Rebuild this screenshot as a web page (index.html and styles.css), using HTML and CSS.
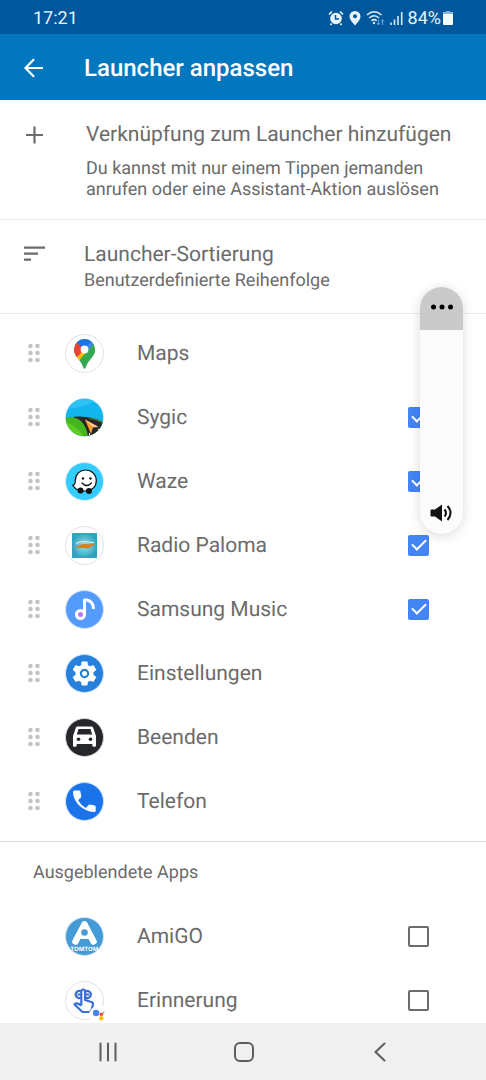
FILE: index.html
```html
<!DOCTYPE html>
<html lang="de">

<head>
  <meta charset="UTF-8">
  <meta name="viewport" content="width=device-width, initial-scale=1.0">
  <title>Launcher anpassen</title>
  <link rel="stylesheet" href="styles.css">
</head>

<body>
  <div class="status">
    <span class="time">17:21</span>
    <div class="status-icons">
      <svg width="16" height="16" viewBox="0 0 16 16">
        <circle cx="8" cy="8.500" r="5.800" fill="#e8f4ff" />
        <path d="M1 4.500 4 1.500M15 4.500l-3-3M3.500 13.500 2.500 15M12.500 13.500l1 1.500" stroke="#e8f4ff" stroke-width="1.700" fill="none" />
        <path d="M7.500 5v4h3.500" stroke="#01579b" stroke-width="1.500" fill="none" />
      </svg>
      <svg width="12" height="16" viewBox="0 0 12 16">
        <path d="M6 1a5.500 5.500 0 0 0-5.500 5.500C.5 10 6 15.500 6 15.500s5.500-5.500 5.500-9A5.500 5.500 0 0 0 6 1z" fill="#e8f4ff" />
        <circle cx="6" cy="6.300" r="2" fill="#01579b" />
      </svg>
      <svg width="19" height="16" viewBox="0 0 19 16">
        <g fill="none" stroke="#d8eaf8" stroke-width="1.600">
          <path d="M1 5q7-6.500 14.500 0M3.300 8q5-4.500 9.700 0M5.500 10.700q2.700-2.300 5.200 0" />
        </g>
        <circle cx="8" cy="13" r="1.200" fill="#d8eaf8" />
        <path d="M12.500 9.500v5M11 13l1.500 2 1.500-2M16.500 15v-5M15 11.500l1.500-2 1.500 2" stroke="#6da3d2" fill="none" />
      </svg>
      <svg width="13" height="16" viewBox="0 0 13 16">
        <path d="M1 12.500V15M4.500 9.500V15M8 6v9M11.700 2v13" stroke="#d8eaf8" stroke-width="1.600" />
      </svg>
      <span class="percent">84%</span>
      <svg width="10" height="16" viewBox="0 0 10 16">
        <path d="M3 1h4v2H3z" fill="#7fabd3" />
        <rect y="2" width="10" height="13" rx="1" fill="#f2f9ff" />
        <path d="M0 4V3q0-1 1-1h8q1 0 1 1v1z" fill="#8db6da" />
      </svg>
    </div>
  </div>

  <header class="appbar">
    <button class="back" type="button" aria-label="Zurück">
      <svg width="20" height="20" viewBox="0 0 20 20">
        <path d="M19 10H2M10 1.300 1.500 10l8.500 8.700" fill="none" stroke="#fff" stroke-width="2.200" />
      </svg>
    </button>
    <h1>Launcher anpassen</h1>
  </header>

  <main>
    <button class="option option-add" type="button">
      <svg width="24" height="28" viewBox="0 0 24 28">
        <path d="M12.500 5.500v17M4 14h17" stroke="#6b6b6b" stroke-width="2.200" />
      </svg>
      <span class="option-text">
        <span class="option-title">Verknüpfung zum Launcher hinzufügen</span>
        <span class="option-desc">Du kannst mit nur einem Tippen jemanden anrufen oder eine Assistant-Aktion auslösen</span>
      </span>
    </button>
    <button class="option" type="button">
      <svg width="24" height="28" viewBox="0 0 24 28">
        <path d="M2 6.700h21M2 12.700h14M2 18.700h7" stroke="#6b6b6b" stroke-width="2.200" />
      </svg>
      <span class="option-text">
        <span class="option-title">Launcher-Sortierung</span>
        <span class="option-desc">Benutzerdefinierte Reihenfolge</span>
      </span>
    </button>

    <svg class="defs" aria-hidden="true">
      <symbol id="grip" viewBox="0 0 14 20">
        <g fill="#c4c4c4">
          <circle cx="3.500" cy="3" r="2.300" />
          <circle cx="10.500" cy="3" r="2.300" />
          <circle cx="3.500" cy="10" r="2.300" />
          <circle cx="10.500" cy="10" r="2.300" />
          <circle cx="3.500" cy="17" r="2.300" />
          <circle cx="10.500" cy="17" r="2.300" />
        </g>
      </symbol>
    </svg>

    <ul class="apps">
      <li>
        <button class="grip" type="button" aria-label="Maps verschieben"><svg width="14" height="20"><use href="#grip" /></svg></button>
        <svg class="icon" viewBox="0 0 39 39">
          <clipPath id="pin">
            <path d="M19.500 5A10.500 10.500 0 0 0 9 15.500c0 4 2 6.500 4.500 9.500 2.500 3.200 4 5.500 4.800 8.500.5 1.700 1.900 1.700 2.400 0 .8-3 2.300-5.300 4.800-8.500 2.500-3 4.500-5.500 4.500-9.500A10.500 10.500 0 0 0 19.500 5z" />
          </clipPath>
          <circle cx="19.500" cy="19.500" r="19" fill="#fff" stroke="#dfe1e5" />
          <g clip-path="url(#pin)">
            <path d="M5 2h30v34H5z" fill="#34a853" />
            <path d="M5 25 20 8l3 10-12 14z" fill="#fbbc04" />
            <path d="M5 8h7l8 7-9.500 9.500L5 20z" fill="#ea4335" />
            <path d="M11.500 8.500 17 2h9l1.500 6L20 16z" fill="#1a73e8" />
            <path d="m23 4 6 6-6.500 8-4-2.500 8-8z" fill="#4285f4" />
            <path d="m29 9-17 20 4 5 20-10V12z" fill="#34a853" />
          </g>
          <circle cx="19.500" cy="15.500" r="3.900" fill="#fff" />
        </svg>
        <label>Maps</label>
      </li>
      <li>
        <button class="grip" type="button" aria-label="Sygic verschieben"><svg width="14" height="20"><use href="#grip" /></svg></button>
        <svg class="icon" viewBox="0 0 39 39">
          <clipPath id="disc">
            <circle cx="19.500" cy="19.500" r="18.700" />
          </clipPath>
          <circle cx="19.500" cy="19.500" r="19" fill="#fff" stroke="#d5eef5" />
          <g clip-path="url(#disc)">
            <path d="M0 0h39v39H0z" fill="#12b5ee" />
            <path d="M0 11Q22 10 32 0H0z" fill="#2fc2f4" />
            <path d="M0 19.500q20-2 39 5V39H0z" fill="#42b51f" />
            <path d="M0 24q12 3 19 15H0z" fill="#5ecb22" />
            <path d="M9 18.700q17-1.500 30 6V34l-5 5H23q-1-10-7-16-3-3-7-3.300z" fill="#26262a" />
            <path d="M24 20q7 1 13 4" stroke="#3f7d2c" stroke-width="1.500" fill="none" />
            <path d="M24.500 35v4M33 31l5 3.500" stroke="#ddd" stroke-width="1.200" />
            <path d="M20 21.500 33.500 29l-5.500.3-2 6.700z" fill="#ff9b2e" />
            <path d="M20 21.500 33.500 29l-5.500.3z" fill="#ffc98c" />
          </g>
        </svg>
        <label for="sygic">Sygic</label>
        <input type="checkbox" id="sygic" checked>
      </li>
      <li>
        <button class="grip" type="button" aria-label="Waze verschieben"><svg width="14" height="20"><use href="#grip" /></svg></button>
        <svg class="icon" viewBox="0 0 39 39">
          <circle cx="19.500" cy="19.500" r="19" fill="#33ccff" stroke="#d9eef6" />
          <path d="M20.500 8c6.300 0 10.800 4.700 10.800 10.500 0 6.300-4.500 10.500-11 10.500h-4C12 28.500 9.500 26 7.800 23.300c2.200-.3 2.500-2 2.500-4.800C10.300 12 15 8 20.500 8z" fill="#fff" stroke="#111" stroke-width="1.200" />
          <circle cx="15.500" cy="28.500" r="3" fill="#111" />
          <circle cx="24" cy="29" r="3" fill="#111" />
          <circle cx="18" cy="16.500" r="1.200" fill="#111" />
          <circle cx="25.500" cy="16.500" r="1.200" fill="#111" />
          <path d="M17 21q4.500 5 9.500 0" stroke="#111" stroke-width="1.300" stroke-linecap="round" fill="none" />
        </svg>
        <label for="waze">Waze</label>
        <input type="checkbox" id="waze" checked>
      </li>
      <li>
        <button class="grip" type="button" aria-label="Radio Paloma verschieben"><svg width="14" height="20"><use href="#grip" /></svg></button>
        <svg class="icon" viewBox="0 0 39 39">
          <radialGradient id="glow">
            <stop offset="0" stop-color="#a5e0ea" />
            <stop offset="1" stop-color="#2fa3bd" />
          </radialGradient>
          <circle cx="19.500" cy="19.500" r="19" fill="#fff" stroke="#dfe1e5" />
          <path d="M7 7h25v25H7z" fill="url(#glow)" />
          <path d="M11 17.500q4-2.500 9-1.800 5 .7 9 .8" stroke="#f3f0de" fill="none" />
          <path d="M8.500 21.500q3.500-.3 5.500-2 2.500-2 6.500-1.500 5.500.6 10.500-.2-3 1-4.500 2.500-2.500 2.500-6.500 2-6-.8-11.500-.8z" fill="#e27a1c" />
        </svg>
        <label for="paloma">Radio Paloma</label>
        <input type="checkbox" id="paloma" checked>
      </li>
      <li>
        <button class="grip" type="button" aria-label="Samsung Music verschieben"><svg width="14" height="20"><use href="#grip" /></svg></button>
        <svg class="icon" viewBox="0 0 39 39">
          <circle cx="19.500" cy="19.500" r="19" fill="#559bfb" stroke="#d9e6f7" />
          <path d="M19.500 25V10h2.500q6.500 1.500 6.500 9" fill="none" stroke="#fff" stroke-width="3" stroke-linejoin="round" />
          <circle cx="15.500" cy="24.500" r="4" fill="#b57be8" stroke="#fff" stroke-width="3" />
        </svg>
        <label for="music">Samsung Music</label>
        <input type="checkbox" id="music" checked>
      </li>
      <li>
        <button class="grip" type="button" aria-label="Einstellungen verschieben"><svg width="14" height="20"><use href="#grip" /></svg></button>
        <svg class="icon" viewBox="0 0 39 39">
          <circle cx="19.500" cy="19.500" r="19" fill="#2680dc" stroke="#cfe6fb" />
          <g transform="translate(4.500 4.500) scale(1.250)">
            <path fill="#fff" d="M19.140 12.940c.04-.3.06-.61.06-.94 0-.32-.02-.64-.07-.94l2.030-1.580a.49.49 0 0 0 .12-.61l-1.920-3.320a.488.488 0 0 0-.59-.22l-2.390.96c-.5-.38-1.030-.7-1.620-.94l-.36-2.540a.484.484 0 0 0-.48-.41h-3.840c-.24 0-.43.17-.47.41l-.36 2.540c-.59.24-1.130.57-1.620.94l-2.390-.96c-.22-.08-.47 0-.59.22L2.740 8.870c-.12.21-.08.47.12.61l2.030 1.580c-.05.3-.09.63-.09.94s.02.640.070.940l-2.030 1.580a.49.49 0 0 0-.12.610l1.920 3.320c.12.220.370.290.590.220l2.390-.960c.5.380 1.030.700 1.620.940l.360 2.540c.050.240.240.410.480.410h3.840c.240 0 .440-.170.470-.410l.360-2.540c.590-.240 1.130-.560 1.620-.940l2.390.960c.220.080.470 0 .590-.220l1.920-3.320c.120-.220.070-.470-.120-.610z" />
            <circle cx="12" cy="12" r="2.900" fill="#fff" stroke="#2680dc" stroke-width="1.800" />
          </g>
        </svg>
        <label>Einstellungen</label>
      </li>
      <li>
        <button class="grip" type="button" aria-label="Beenden verschieben"><svg width="14" height="20"><use href="#grip" /></svg></button>
        <svg class="icon" viewBox="0 0 39 39">
          <circle cx="19.500" cy="19.500" r="19" fill="#25272b" stroke="#d8dadd" />
          <path d="M12.500 8.500h14q1.200 0 1.700 1.300L31 18v9.500q0 1.300-1.300 1.300h-1q-1.400 0-1.400-1.300V26H11.700v1.500q0 1.300-1.400 1.300h-1Q8 28.800 8 27.500V18l2.800-8.200q.5-1.300 1.700-1.300z" fill="#fff" />
          <path d="m13.500 11-1.700 5.500h15.400L25.500 11z" fill="#25272b" />
          <circle cx="13.500" cy="21.300" r="1.800" fill="#25272b" />
          <circle cx="25.500" cy="21.300" r="1.800" fill="#25272b" />
        </svg>
        <label>Beenden</label>
      </li>
      <li>
        <button class="grip" type="button" aria-label="Telefon verschieben"><svg width="14" height="20"><use href="#grip" /></svg></button>
        <svg class="icon" viewBox="0 0 39 39">
          <circle cx="19.500" cy="19.500" r="19" fill="#1a73e8" stroke="#cfe2f8" />
          <path d="M9.500 8.500h4.700q1 0 1.200 1l.9 4.500q.1.800-.4 1.400l-2.800 2.800q2.700 5 7.700 7.700l2.800-2.900q.6-.6 1.400-.4l4.700 1q1 .2 1 1.200v3.700q0 1.500-1.500 1.500C17.500 29.500 8 19.500 8 10q0-1.500 1.500-1.500z" fill="#fff" />
        </svg>
        <label>Telefon</label>
      </li>
    </ul>

    <h2>Ausgeblendete Apps</h2>
    <ul class="apps hidden-apps">
      <li>
        <svg class="icon" viewBox="0 0 39 39">
          <circle cx="19.500" cy="19.500" r="19" fill="#449bd5" stroke="#cfe4f3" />
          <path d="M19.500 7.500 10.500 24.500M19.500 7.500l9 17" stroke="#fff" stroke-width="6.500" stroke-linecap="round" />
          <path d="m19.500 7-7 14 4.500 1h5l4.500-1z" fill="#fff" />
          <circle cx="19.500" cy="15.500" r="3.300" fill="#449bd5" />
          <text x="19.500" y="34" class="brand">TOMTOM</text>
        </svg>
        <label for="amigo">AmiGO</label>
        <input type="checkbox" id="amigo">
      </li>
      <li>
        <svg class="icon" viewBox="0 0 39 39">
          <circle cx="19.500" cy="19.500" r="19" fill="#fff" stroke="#dbe3ee" />
          <g fill="none" stroke="#3b6fd8" stroke-width="2.200" stroke-linejoin="round">
            <path d="M16.300 24.500V10.300q0-1.800 1.900-1.800t1.900 1.800v8.700l6.200 2q2 .7 1.700 2.500l-1.300 5q-.6 2.500-2.500 2.500h-6.700L9.500 23.500q2-2.500 6.800 1" />
            <path d="M16 16.500a3.500 3.500 0 1 1 0-6M20.500 10.500a3.500 3.500 0 1 1 0 6M12.500 13.500h4M20 13.500h4" />
          </g>
          <circle cx="34" cy="34.500" r="10" fill="#fff" />
          <circle cx="31" cy="32" r="3.200" fill="#4285f4" />
          <circle cx="36.300" cy="33.300" r="1.800" fill="#ea4335" />
          <circle cx="38.700" cy="31.500" r=".8" fill="#34a853" />
          <circle cx="36.300" cy="37.200" r="2.200" fill="#fbbc04" />
        </svg>
        <label for="erinnerung">Erinnerung</label>
        <input type="checkbox" id="erinnerung">
      </li>
    </ul>
  </main>

  <!-- 音量面板 浮在列表上面 -->
  <div class="volume">
    <button class="volume-more" type="button" aria-label="Mehr">
      <svg width="24" height="6" viewBox="0 0 24 6">
        <circle cx="3.500" cy="3" r="2.500" />
        <circle cx="12" cy="3" r="2.500" />
        <circle cx="20.500" cy="3" r="2.500" />
      </svg>
    </button>
    <input class="volume-range" type="range" min="0" max="15" value="0" aria-label="Lautstärke">
    <svg width="23" height="18" viewBox="0 0 23 18">
      <path d="M1.500 5.500H5L12 .5v17L5 12.500H1.500Q.5 12.500.5 11.500v-5q0-1 1-1z" fill="#111" />
      <path d="M14.500 5.500q3 3.500 0 7M17.500 2q6 7 0 14" fill="none" stroke="#111" stroke-width="2" />
    </svg>
  </div>

  <nav>
    <button type="button" aria-label="Letzte Apps">
      <svg width="20" height="20" viewBox="0 0 20 20">
        <path d="M2.500 1.500v17M10 1.500v17M17.500 1.500v17" />
      </svg>
    </button>
    <button type="button" aria-label="Startseite">
      <svg width="20" height="20" viewBox="0 0 20 20">
        <rect x="1" y="1" width="18" height="18" rx="5" />
      </svg>
    </button>
    <button type="button" aria-label="Zurück">
      <svg width="20" height="20" viewBox="0 0 20 20">
        <path d="m14.500 1.500-9 8.500 9 8.500" />
      </svg>
    </button>
  </nav>
</body>

</html>
```
FILE: styles.css
```css
* {
  padding: 0;
  margin: 0;
  box-sizing: border-box;
}

body {
  display: flex;
  flex-direction: column;
  height: 100vh;
  position: relative;
  overflow: hidden;
  font-family: Roboto, "Liberation Sans", sans-serif;
  text-rendering: geometricPrecision;
  color: #6b6b6b;
  background-color: #fff;
}

button {
  border: 0;
  background: none;
  font: inherit;
  text-rendering: inherit;
  color: inherit;
  text-align: left;
  cursor: pointer;
}

svg {
  display: block;
  flex: none;
}

.defs {
  display: none;
}

/* status bar */
.status {
  display: flex;
  flex: none;
  justify-content: space-between;
  align-items: center;
  height: 34px;
  padding: 2px 33px 0;
  color: #e8f4ff;
  font-size: 18px;
  background-color: #01579b;
}

.status-icons {
  display: flex;
  align-items: center;
  gap: 5px;
}

.percent {
  margin-right: -3px;
}

/* app bar */
.appbar {
  display: flex;
  flex: none;
  align-items: center;
  gap: 40px;
  height: 66px;
  padding: 2px 24px 0;
  color: #fff;
  background-color: #0277bd;
}

.appbar h1 {
  font-size: 24px;
  font-weight: 500;
}

main {
  flex: 1;
  min-height: 0;
  overflow: hidden;
}

.option {
  display: flex;
  gap: 38px;
  width: 100%;
  padding: 21px 22px 22px;
  border-bottom: 1px solid #ececec;
}

.option-add {
  gap: 40px;
  padding-bottom: 19px;
}

.option-text {
  display: flex;
  flex-direction: column;
  gap: 1px;
}

.option-add .option-text {
  gap: 9px;
}

.option-title {
  font-size: 21px;
  line-height: 28px;
}

.option-desc {
  font-size: 18px;
  line-height: 21px;
}

.apps {
  list-style: none;
  padding: 7px 0 8px;
  border-bottom: 1px solid #d8d8d8;
}

.apps li {
  display: flex;
  align-items: center;
  height: 64px;
  padding: 0 57px 0 27px;
}

.grip {
  margin-right: 24px;
}

.icon {
  width: 39px;
  height: 39px;
  margin-right: 33px;
  overflow: visible;
}

.apps label {
  flex: 1;
  padding-top: 2px;
  font-size: 21px;
}

.apps input {
  appearance: none;
  width: 21px;
  height: 21px;
  border: 2px solid #6b6b6b;
  border-radius: 2px;
}

.apps input:checked {
  display: flex;
  justify-content: center;
  border: 0;
  background-color: #4285f4;
}

.apps input:checked::before {
  content: "";
  box-sizing: border-box;
  width: 8px;
  height: 14px;
  margin-top: 1px;
  border: solid #fff;
  border-width: 0 2px 2px 0;
  transform: rotate(45deg);
}

h2 {
  padding: 20px 33px 0;
  font-size: 18px;
  font-weight: 400;
  line-height: 22px;
}

.hidden-apps {
  padding-top: 20px;
}

.hidden-apps li {
  padding-left: 65px;
}

.brand {
  font: 700 6px "Open Sans", sans-serif;
  text-anchor: middle;
  fill: #fff;
}

/* volume panel */
.volume {
  display: flex;
  flex-direction: column;
  align-items: center;
  position: absolute;
  top: 287px;
  right: 23px;
  width: 43px;
  padding-bottom: 12px;
  border-radius: 22px;
  overflow: hidden;
  background-color: #fcfcfc;
  box-shadow: 0 2px 12px rgba(0, 0, 0, .15);
}

.volume-more {
  display: flex;
  justify-content: center;
  align-items: center;
  width: 100%;
  height: 43px;
  padding-bottom: 3px;
  background-color: #cacaca;
}

.volume-range {
  appearance: none;
  writing-mode: vertical-lr;
  direction: rtl;
  width: 43px;
  height: 174px;
  background: none;
}

.volume-range::-webkit-slider-thumb {
  appearance: none;
  width: 43px;
  height: 1px;
}

/* navigation */
nav {
  display: flex;
  flex: none;
  justify-content: space-around;
  padding: 0 38px 0 40px;
  height: 57px;
  background-color: #f0f0f0;
}

nav button {
  display: flex;
  flex: 1;
  justify-content: center;
  align-items: center;
}

nav svg {
  fill: none;
  stroke: #5c5c5c;
  stroke-width: 2;
  stroke-linecap: round;
}
```
